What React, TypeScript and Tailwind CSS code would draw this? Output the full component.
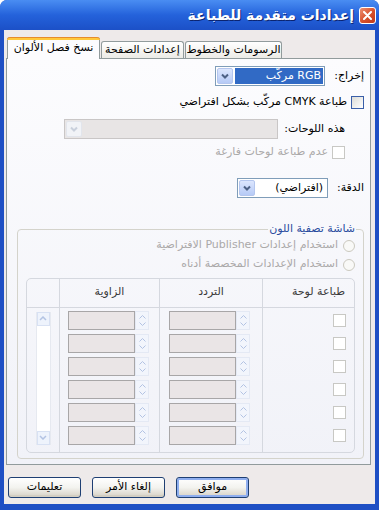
import React from "react";

const rows = [1, 2, 3, 4, 5, 6];

const ComboArrow = ({ disabled }: { disabled?: boolean }) => (
  <div
    className={`w-[16px] h-full shrink-0 flex items-center justify-center rounded-[2px] border ${
      disabled
        ? "border-[#E2E5EC] bg-[#F1F3F7]"
        : "border-[#B4C6EE] bg-linear-to-b from-[#DCE6FD] to-[#B6CAF6]"
    }`}
  >
    <svg width="8" height="6" viewBox="0 0 8 6">
      <path
        d="M1 1.5 L4 4.5 L7 1.5"
        fill="none"
        stroke={disabled ? "#C9D0DC" : "#4D6185"}
        strokeWidth="2"
      />
    </svg>
  </div>
);

const CheckBox = ({ disabled }: { disabled?: boolean }) => (
  <div
    className={`w-[13px] h-[13px] shrink-0 border ${
      disabled
        ? "border-[#C8C8C4] bg-white"
        : "border-[#3A5FA8] bg-linear-to-br from-[#DCDCD7] to-[#FFFFFF]"
    }`}
  />
);

const Radio = () => (
  <div className="w-[12px] h-[12px] shrink-0 rounded-full border border-[#CBC9BF] bg-[#F9F9F7]" />
);

const SpinBox = () => (
  <div className="flex items-center h-[19px]">
    <div className="w-[14px] h-full flex flex-col items-center justify-center gap-[3px] border border-[#E4E9F4] bg-[#F2F5FC]">
      <svg width="7" height="4" viewBox="0 0 7 4">
        <path d="M0.5 3.5L3.5 0.5L6.5 3.5" stroke="#B3C3E3" fill="none" />
      </svg>
      <svg width="7" height="4" viewBox="0 0 7 4">
        <path d="M0.5 0.5L3.5 3.5L6.5 0.5" stroke="#B3C3E3" fill="none" />
      </svg>
    </div>
    <div className="w-[67px] h-full border border-[#A8A6A7] bg-[#EAE5E6]" />
  </div>
);

const XpButton = ({ label, isDefault }: { label: string; isDefault?: boolean }) => (
  <div
    className={`w-[73px] h-[21px] rounded-[3px] border border-[#1F3F73] flex items-center justify-center bg-linear-to-b from-[#FFFFFF] via-[#F3F3EF] to-[#D6D0C5] ${
      isDefault ? "shadow-[inset_0_0_0_2px_#8FAEEF]" : "shadow-[inset_0_-2px_0_#D3CEC2]"
    }`}
  >
    {label}
  </div>
);

export default function App() {
  return (
    <div
      dir="rtl"
      className="w-[379px] h-[510px] bg-[#1E4FC4] flex flex-col overflow-hidden rounded-t-[7px] font-['DejaVu_Sans',sans-serif] text-[11px] text-black"
    >
      {/* title bar */}
      <div className="h-[30px] shrink-0 flex items-center pr-[3px] bg-linear-to-b from-[#4A8DF2] via-[#2462DB] to-[#1C50C7]">
        <div className="w-[17px] h-[17px] rounded-[3px] border border-white bg-linear-to-br from-[#EC9274] via-[#D9532E] to-[#BF3818] flex items-center justify-center">
          <svg width="9" height="9" viewBox="0 0 9 9">
            <path d="M1 1L8 8M8 1L1 8" stroke="white" strokeWidth="2" strokeLinecap="round" />
          </svg>
        </div>
        <span className="mr-[5px] text-white font-bold text-[14px] [text-shadow:1px_1px_0_#0B2470]">
          إعدادات متقدمة للطباعة
        </span>
      </div>

      <div className="flex-1 mx-[4px] mb-[6px] bg-[#EEEAEA] flex flex-col">
        {/* tabs */}
        <div dir="ltr" className="h-[21px] mt-[7px] ml-[3px] flex items-start">
          <div className="relative z-10 w-[93px] h-[22px] flex flex-col border-x border-[#919B9C] bg-[#FCFCFE] rounded-t-[3px]">
            <div className="h-[3px] bg-[#FFC83C] border-t border-[#E68B2C] rounded-t-[3px] -mx-[1px]" />
            <div className="flex-1 flex items-center justify-center pb-[2px]">نسخ فصل الألوان</div>
          </div>
          <div className="mt-[4px] ml-[1px] w-[83px] h-[17px] flex items-center justify-center border border-b-0 border-[#919B9C] rounded-t-[3px] bg-linear-to-b from-[#FFFFFF] to-[#ECEBE6]">
            إعدادات الصفحة
          </div>
          <div className="mt-[4px] ml-[1px] w-[97px] h-[17px] flex items-center justify-center border border-b-0 border-[#919B9C] rounded-t-[3px] bg-linear-to-b from-[#FFFFFF] to-[#ECEBE6]">
            الرسومات والخطوط
          </div>
        </div>

        {/* tab panel */}
        <div className="mr-[4px] w-[365px] h-[407px] border border-[#919B9C] bg-linear-to-b from-[#FCFCFE] to-[#F1F2F8] flex flex-col pr-[6px]">
          {/* output */}
          <div className="mt-[7px] h-[20px] flex items-center">
            <div className="w-[39px]">إخراج:</div>
            <div className="w-[110px] h-full border border-[#7F9DB9] bg-white flex items-center p-[1px] gap-[2px]">
              <div className="flex-1 h-full bg-[#316AC5] text-white flex items-center px-[2px]">RGB مركّب</div>
              <ComboArrow />
            </div>
          </div>

          <div className="mt-[9px] h-[14px] flex items-center gap-[4px]">
            <CheckBox />
            <span>طباعة CMYK مركّب بشكل افتراضي</span>
          </div>

          {/* plates */}
          <div className="mt-[10px] mr-[19px] h-[20px] flex items-center">
            <div className="w-[67px]">هذه اللوحات:</div>
            <div className="w-[214px] h-full border border-[#C9C6C6] bg-[#E8E5E5] flex items-center p-[1px] justify-end">
              <ComboArrow disabled />
            </div>
          </div>

          <div className="mt-[7px] mr-[19px] h-[13px] flex items-center gap-[4px] text-[#ABA9A9]">
            <CheckBox disabled />
            <span>عدم طباعة لوحات فارغة</span>
          </div>

          {/* resolution */}
          <div className="mt-[19px] h-[20px] flex items-center">
            <div className="w-[36px]">الدقة:</div>
            <div className="w-[91px] h-full border border-[#7F9DB9] bg-white flex items-center p-[1px]">
              <div className="flex-1 px-[3px]">(افتراضي)</div>
              <ComboArrow />
            </div>
          </div>

          {/* color screening */}
          <fieldset className="mt-[23px] w-[347px] border border-[#D4D3CB] rounded-[4px] px-[7px] pb-[5px]">
            <legend className="px-[1px] text-[#2A4C9E]">شاشة تصفية اللون</legend>

            <div className="h-[16px] flex items-center gap-[5px] mr-[1px] text-[#ABA9A9]">
              <Radio />
              <span>استخدام إعدادات Publisher الافتراضية</span>
            </div>
            <div className="mt-[3px] h-[16px] flex items-center gap-[5px] mr-[1px] text-[#ABA9A9]">
              <Radio />
              <span>استخدام الإعدادات المخصصة أدناه</span>
            </div>

            <div className="mt-[5px] mr-[1px] w-[329px] h-[175px] border border-[#D5D8DF] rounded-[5px] flex text-[#3A3A3A]">
              <div className="w-[92px] flex flex-col border-l border-[#D5D8DF]">
                <div className="h-[29px] border-b border-[#D5D8DF] flex items-center pr-[9px]">طباعة لوحة</div>
                <div className="flex flex-col gap-[4px] pt-[3px] pr-[8px]">
                  {rows.map((r) => (
                    <div key={r} className="h-[19px] flex items-center">
                      <CheckBox disabled />
                    </div>
                  ))}
                </div>
              </div>

              <div className="w-[103px] flex flex-col border-l border-[#D5D8DF]">
                <div className="h-[29px] border-b border-[#D5D8DF] flex items-center justify-center">التردد</div>
                <div className="flex flex-col gap-[4px] pt-[3px] pr-[12px]">
                  {rows.map((r) => (
                    <SpinBox key={r} />
                  ))}
                </div>
              </div>

              <div className="w-[100px] flex flex-col border-l border-[#D5D8DF]">
                <div className="h-[29px] border-b border-[#D5D8DF] flex items-center justify-center">الزاوية</div>
                <div className="flex flex-col gap-[4px] pt-[3px] pr-[10px]">
                  {rows.map((r) => (
                    <SpinBox key={r} />
                  ))}
                </div>
              </div>

              <div className="flex-1 flex flex-col">
                <div className="h-[29px] border-b border-[#D5D8DF]" />
                <div className="flex justify-center pt-[4px]">
                  <div className="w-[15px] h-[133px] flex flex-col justify-between border-x border-[#E6E9F0] bg-white">
                    <div className="h-[14px] flex items-center justify-center bg-[#EEF3FC] border border-[#D8E1F3]">
                      <svg width="8" height="5" viewBox="0 0 8 5">
                        <path d="M1 4L4 1L7 4" stroke="#B3C3E3" strokeWidth="1.5" fill="none" />
                      </svg>
                    </div>
                    <div className="h-[14px] flex items-center justify-center bg-[#EEF3FC] border border-[#D8E1F3]">
                      <svg width="8" height="5" viewBox="0 0 8 5">
                        <path d="M1 1L4 4L7 1" stroke="#B3C3E3" strokeWidth="1.5" fill="none" />
                      </svg>
                    </div>
                  </div>
                </div>
              </div>
            </div>
          </fieldset>
        </div>

        {/* buttons */}
        <div className="mt-[12px] pl-[4px] flex justify-end gap-[11px]">
          <XpButton label="موافق" isDefault />
          <XpButton label="إلغاء الأمر" />
          <XpButton label="تعليمات" />
        </div>
      </div>
    </div>
  );
}
